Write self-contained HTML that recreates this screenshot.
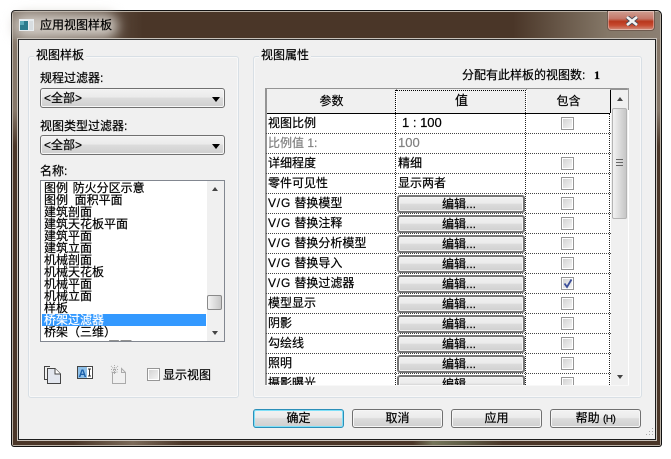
<!DOCTYPE html>
<html><head><meta charset="utf-8">
<style>
html,body{margin:0;padding:0;background:#fff;width:671px;height:459px;overflow:hidden}
body{font:12px/14px "Liberation Sans","WenQuanYi Zen Hei","Noto Sans CJK SC",sans-serif;color:#000;position:relative;-webkit-text-stroke:.2px}
div,span{position:absolute;box-sizing:border-box;white-space:nowrap}
em{font-style:normal;letter-spacing:.8px}
small{font-size:10px;letter-spacing:-.5px}
.frame{left:11px;top:10px;width:651px;height:437px;border:1px solid #111;border-radius:4px 5px 3px 3px;
background:linear-gradient(#86786a 0,#86786a 30px,#86786a 100px,#4a3628 135px,#4a3628 100%);box-shadow:inset 0 0 0 1px #b9b0a5}
.title{left:13px;top:12px;width:647px;height:27px;background:linear-gradient(90deg,#8c8176 0,#4a3628 130px,#4a3628 500px,#857868 595px,#8b7f72 100%)}
.glow{left:14px;top:14px;width:104px;height:24px;border-radius:12px;background:#cfc9c2;filter:blur(6px)}
.bot{left:13px;top:440px;width:647px;height:5px;background:linear-gradient(90deg,#4a3628 0,#4a3628 60px,#7c6b5a 120px,#4a3628 170px,#4a3628 400px,#75755a 420px,#5d5a44 455px,#4a3628 490px)}
.client{left:18px;top:39px;width:638px;height:401px;background:#f0f0f0;border:1px solid #1d1d1d;border-top-color:#333;box-shadow:0 0 0 1px #c8c2ba}
.close{left:607px;top:11px;width:48px;height:20px;border:1px solid #6e5a4e;border-top:0;border-radius:0 0 4px 4px;background:linear-gradient(#cf9f92 0,#c4786a 40%,#b8371c 55%,#c64a30 75%,#d2907e 100%);box-shadow:inset 0 0 0 1px rgba(255,255,255,.35)}
.group{border:1px solid #d8dfe5;border-radius:3px;box-shadow:inset 0 0 0 1px #f8f8f8}
.lg{background:#f0f0f0;padding:0 2px;height:14px;line-height:14px}
.combo{left:40px;width:185px;height:20px;border:1px solid #707070;border-radius:3px;background:linear-gradient(#f2f2f2 0,#ebebeb 45%,#dcdcdc 50%,#cfcfcf 100%);box-shadow:inset 0 0 0 1px #f6f6f6}
.combo i{position:absolute;right:4px;top:8px;width:0;height:0;border:4px solid transparent;border-top:5px solid #000;border-bottom:0}
.combo b{position:absolute;left:3px;top:3px;right:20px;height:14px;font-weight:normal;line-height:13px}
.li{left:44px;height:14px;line-height:14px}
.lc{left:0;top:0}
.th{top:89px;height:24px;line-height:24px;text-align:center;background:#f0f0f0}
.hl{height:0;left:266px;width:345px;border-top:1px dotted #444}
.vl{width:0;border-left:1px dotted #222}
.n{left:268px;height:16px;line-height:16px}
.v{left:398px;height:16px;line-height:16px}
.cb{left:561px;width:13px;height:13px;border:1px solid #969696;background:linear-gradient(135deg,#d0d0d0,#f6f6f6);box-shadow:inset 0 0 0 1px #fff}
.eb{left:397px;width:128px;height:18px;line-height:15px;text-align:center;border:2px solid #777;border-radius:3px;background:linear-gradient(#f2f2f2 0,#ebebeb 45%,#dcdcdc 50%,#cfcfcf 100%);box-shadow:inset 0 0 0 1px #f6f6f6;padding-right:4px}
.btn{top:409px;height:19px;width:91px;line-height:17px;text-align:center;border:1px solid #707070;border-radius:3px;background:linear-gradient(#f2f2f2 0,#ebebeb 45%,#dcdcdc 50%,#cfcfcf 100%);box-shadow:inset 0 0 0 1px #f6f6f6}
</style></head><body>
<div class="frame"></div>
<div class="title"></div>
<div class="glow"></div>
<div class="bot"></div>
<div class="client"></div>
<div class="close"><svg style="position:absolute;left:17px;top:5px" width="14" height="10" viewBox="0 0 14 10"><path d="M2 1L12 9M12 1L2 9" stroke="#4a4a55" stroke-width="4.4"/><path d="M2 1L12 9M12 1L2 9" stroke="#f2f2f2" stroke-width="2.6"/></svg></div>
<svg style="position:absolute;left:19px;top:19px" width="15" height="12"><rect width="15" height="12" fill="#e8edf0"/><rect x="1" y="2" width="8" height="9" fill="#2b7a8c"/><rect x="10" y="2" width="4" height="9" fill="#d8dde0"/><rect x="1" y="2" width="4" height="4" fill="#5aa9b8"/></svg>
<div style="left:40px;top:18px">应用视图样板</div>

<div class="group" style="left:28px;top:56px;width:211px;height:342px"></div>
<div class="lg" style="left:34px;top:48px">视图样板</div>
<div style="left:40px;top:71px">规程过滤器:</div>
<div class="combo" style="top:88px"><b>&lt;全部&gt;</b><i></i></div>
<div style="left:40px;top:119px">视图类型过滤器:</div>
<div class="combo" style="top:135px"><b>&lt;全部&gt;</b><i></i></div>
<div style="left:40px;top:164px">名称:</div>

<div style="left:40px;top:180px;width:185px;height:162px;background:#fff;border:1px solid #828790;overflow:hidden">
<div class="lc" style="left:-41px;top:-181px;width:300px;height:400px">
<div style="left:42px;top:314px;width:164px;height:12px;background:#3399ff"></div>
<div class="li" style="top:181px;word-spacing:-1px">图例&nbsp; 防火分区示意</div>
<div class="li" style="top:193px">图例&nbsp; 面积平面</div>
<div class="li" style="top:205px">建筑剖面</div>
<div class="li" style="top:217px">建筑天花板平面</div>
<div class="li" style="top:229px">建筑平面</div>
<div class="li" style="top:241px">建筑立面</div>
<div class="li" style="top:253px">机械剖面</div>
<div class="li" style="top:265px">机械天花板</div>
<div class="li" style="top:277px">机械平面</div>
<div class="li" style="top:289px">机械立面</div>
<div class="li" style="top:301px">样板</div>
<div class="li" style="top:313px;color:#fff">桥架过滤器</div>
<div class="li" style="top:325px">桥架（三维）</div>
<div class="li" style="top:339px;left:108px">平面</div>
<div style="left:207px;top:181px;width:17px;height:160px;background:#f0f0f0"></div>
<div style="left:207px;top:295px;width:15px;height:15px;border:1px solid #8a8a8a;border-radius:2px;background:linear-gradient(90deg,#f4f4f4,#c8c8c8)"></div>
<div style="left:212px;top:187px;width:0;height:0;border:3px solid transparent;border-bottom:4px solid #444;border-top:0"></div>
<div style="left:212px;top:331px;width:0;height:0;border:3px solid transparent;border-top:4px solid #444;border-bottom:0"></div>
</div></div>

<svg style="position:absolute;left:43px;top:364px" width="19" height="20"><path d="M7 2.500H1.500V15.500H4" fill="none" stroke="#444"/><path d="M4.500 4.500H12L17.500 10V19.500H4.500Z" fill="#e2e6ee" stroke="#444"/><path d="M12 4.500V10H17.500" fill="#fff" stroke="#444"/></svg>
<svg style="position:absolute;left:77px;top:366px" width="17" height="14"><rect x=".5" y=".5" width="15" height="12" fill="#fff" stroke="#444"/><rect x="1" y="1" width="9" height="11" fill="#8fc0e8"/><text x="1.500" y="11" font-size="11" font-weight="bold" fill="#1a5ea8" stroke="none" font-family="Liberation Sans">A</text><path d="M11 3H14M12.500 3V10M11 10H14" stroke="#333" fill="none"/></svg>
<svg style="position:absolute;left:110px;top:364px" width="17" height="20"><path d="M6 8.500H2.500V19.500H15.500V8.500L11.500 4.500V8.500H15.500" fill="none" stroke="#aaa"/><path d="M1 2L8 9M8 2L1 9M4.500 1V10M1 5.500H8" stroke="#aaa" stroke-dasharray="1 1"/></svg>
<div class="cb" style="left:147px;top:368px"></div>
<div style="left:163px;top:368px">显示视图</div>

<div class="group" style="left:253px;top:56px;width:389px;height:342px"></div>
<div class="lg" style="left:259px;top:48px">视图属性</div>
<div style="left:462px;top:68px">分配有此样板的视图数:</div>
<div style="left:594px;top:68px;font:bold 12px/14px 'Liberation Serif',serif">1</div>

<div style="left:265px;top:88px;width:364px;height:297px;background:#fff;border:2px solid #949494;border-bottom:0;border-right:0"></div>
<div style="left:627px;top:88px;width:2px;height:22px;background:#a0a0a0"></div>
<div class="th" style="left:267px;width:129px">参数</div>
<div class="th" style="left:397px;width:129px;font-size:13px">值</div>
<div class="th" style="left:527px;width:83px">包含</div>
<div style="left:267px;top:113px;width:343px;height:1px;background:#000"></div>
<div class="vl" style="left:395px;top:90px;height:23px;border-left:1px dotted #000"></div>
<div class="vl" style="left:525px;top:90px;height:23px"></div>
<div style="left:396px;top:90px;width:130px;height:0;border-top:1px dotted #000"></div>
<div style="left:610px;top:90px;width:1px;height:23px;background:#000"></div>
<div class="vl" style="left:395px;top:114px;height:271px"></div>
<div class="vl" style="left:525px;top:114px;height:271px"></div>
<div class="vl" style="left:609px;top:114px;height:271px"></div>

<div class="hl" style="top:133px"></div><div class="hl" style="top:153px"></div><div class="hl" style="top:173px"></div><div class="hl" style="top:193px"></div><div class="hl" style="top:213px"></div><div class="hl" style="top:233px"></div><div class="hl" style="top:253px"></div><div class="hl" style="top:273px"></div><div class="hl" style="top:293px"></div><div class="hl" style="top:313px"></div><div class="hl" style="top:333px"></div><div class="hl" style="top:353px"></div><div class="hl" style="top:373px"></div>

<div class="n" style="top:115px">视图比例</div><div class="v" style="top:115px;left:402px;font-size:13px">1 : 100</div><div class="cb" style="top:117px"></div>
<div class="n" style="top:135px;color:#808080">比例值 1:</div><div class="v" style="top:135px;color:#808080;font-size:13px">100</div>
<div class="n" style="top:155px">详细程度</div><div class="v" style="top:155px">精细</div><div class="cb" style="top:157px"></div>
<div class="n" style="top:175px">零件可见性</div><div class="v" style="top:175px">显示两者</div><div class="cb" style="top:177px"></div>
<div class="n" style="top:195px"><em>V/G</em> 替换模型</div><div class="eb" style="top:195px">编辑...</div><div class="cb" style="top:197px"></div>
<div class="n" style="top:215px"><em>V/G</em> 替换注释</div><div class="eb" style="top:215px">编辑...</div><div class="cb" style="top:217px"></div>
<div class="n" style="top:235px"><em>V/G</em> 替换分析模型</div><div class="eb" style="top:235px">编辑...</div><div class="cb" style="top:237px"></div>
<div class="n" style="top:255px"><em>V/G</em> 替换导入</div><div class="eb" style="top:255px">编辑...</div><div class="cb" style="top:257px"></div>
<div class="n" style="top:275px"><em>V/G</em> 替换过滤器</div><div class="eb" style="top:275px">编辑...</div><div class="cb" style="top:277px"><svg style="position:absolute;left:1px;top:0" width="10" height="11"><path d="M1.500 5.500L4 9L8.500 1.500" fill="none" stroke="#3c4f9a" stroke-width="1.800"/></svg></div>
<div class="n" style="top:295px">模型显示</div><div class="eb" style="top:295px">编辑...</div><div class="cb" style="top:297px"></div>
<div class="n" style="top:315px">阴影</div><div class="eb" style="top:315px">编辑...</div><div class="cb" style="top:317px"></div>
<div class="n" style="top:335px">勾绘线</div><div class="eb" style="top:335px">编辑...</div><div class="cb" style="top:337px"></div>
<div class="n" style="top:355px">照明</div><div class="eb" style="top:355px">编辑...</div><div class="cb" style="top:357px"></div>
<div style="left:267px;top:374px;width:343px;height:11px;overflow:hidden"><div class="n" style="left:1px;top:1px">摄影曝光</div><div class="eb" style="left:130px;top:1px">编辑...</div><div class="cb" style="left:294px;top:3px"></div></div>

<div style="left:611px;top:90px;width:17px;height:295px;background:#f0f0f0"></div>
<div style="left:612px;top:108px;width:15px;height:111px;border:1px solid #b4b4b4;border-radius:2px;background:linear-gradient(90deg,#f2f2f2,#c6c6c6)"></div>
<div style="left:616px;top:159px;width:7px;height:7px;border-top:1px solid #666;border-bottom:1px solid #666"></div>
<div style="left:616px;top:162px;width:7px;height:1px;background:#666"></div>
<div style="left:617px;top:97px;width:0;height:0;border:3px solid transparent;border-bottom:4px solid #444;border-top:0"></div>
<div style="left:617px;top:375px;width:0;height:0;border:3px solid transparent;border-top:4px solid #444;border-bottom:0"></div>
<div style="left:265px;top:385px;width:364px;height:1px;background:#f8f8f8"></div>

<div class="btn" style="left:253px;border-color:#2c8fb8;box-shadow:inset 0 0 0 1px #7fe0f8">确定</div>
<div class="btn" style="left:352px">取消</div>
<div class="btn" style="left:451px">应用</div>
<div class="btn" style="left:550px">帮助 <small>(H)</small></div>
<svg style="position:absolute;left:643px;top:427px" width="11" height="11"><path d="M9 1h1v1H9zM6 4h1v1H6zM9 4h1v1H9zM3 7h1v1H3zM6 7h1v1H6zM9 7h1v1H9z" fill="#aaa"/></svg>
</body></html>
